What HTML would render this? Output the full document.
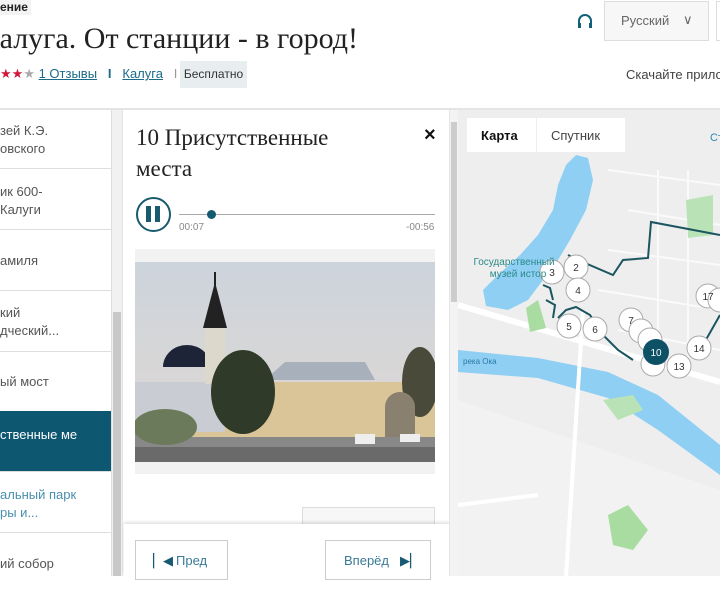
<!DOCTYPE html>
<html><head><meta charset="utf-8"><style>
*{margin:0;padding:0;box-sizing:border-box}
body{width:720px;height:576px;overflow:hidden;background:#fff;font-family:"Liberation Sans","DejaVu Sans",sans-serif;position:relative;color:#333}
.a{position:absolute}
.serif{font-family:"Liberation Serif","DejaVu Serif",serif}
.li{position:absolute;left:0;width:111px;height:61px;border-bottom:1px solid #ddd;font-size:13px;color:#555;padding-left:0;line-height:18px}
</style></head><body>
<div class="a" style="left:0;top:0;font-size:12px;font-weight:bold;color:#222;background:#f3f3f3;padding:0 3px 1px 0">ение</div>
<div class="a serif" style="left:-20px;top:22px;font-size:30px;color:#222">Калуга. От станции - в город!</div>
<div class="a" style="left:0;top:66px;font-size:13px;color:#444;white-space:nowrap"><span style="color:#d0183c">★★</span><span style="color:#aaa">★</span> <span style="color:#1a6a88;text-decoration:underline">1 Отзывы</span> &nbsp; <b style="color:#1a6a88">I</b> &nbsp; <span style="color:#1a6a88;text-decoration:underline">Калуга</span> &nbsp; <span style="color:#999">I</span></div>
<div class="a" style="left:180px;top:61px;width:67px;height:27px;background:#e8edf0;font-size:12px;line-height:27px;text-align:center;color:#333">Бесплатно</div>
<div class="a" style="left:626px;top:67px;font-size:13px;color:#444;white-space:nowrap">Скачайте прило</div>
<svg class="a" style="left:577px;top:13px" width="16" height="16" viewBox="0 0 16 16"><path d="M2 13V8a6 6 0 0 1 12 0v5" fill="none" stroke="#11607a" stroke-width="2"/><rect x="1" y="10" width="3" height="5" fill="#11607a"/><rect x="12" y="10" width="3" height="5" fill="#11607a"/></svg>
<div class="a" style="left:604px;top:1px;width:105px;height:40px;border:1px solid #ddd;background:#f7f7f7;font-size:13px;color:#666;line-height:38px;padding-left:16px">Русский<span style="position:absolute;left:78px;top:-1px;font-size:13px">∨</span></div>
<div class="a" style="left:716px;top:1px;width:4px;height:40px;border:1px solid #ddd;border-right:none"></div>
<div class="a" style="left:0;top:108px;width:720px;height:2px;background:#e4e4e4"></div>

<div class="li" style="top:108px;padding-top:14px">зей К.Э.<br>овского</div>
<div class="li" style="top:169px;padding-top:14px">ик 600-<br>Калуги</div>
<div class="li" style="top:230px;padding-top:22px">амиля</div>
<div class="li" style="top:291px;padding-top:13px">кий<br>дческий...</div>
<div class="li" style="top:351px;padding-top:22px">ый мост</div>
<div class="li" style="top:411px;background:#0d5770;color:#fff;padding-top:15px">ственные ме</div>
<div class="li" style="top:472px;color:#4a8fb0;padding-top:14px">альный парк<br>ры и...</div>
<div class="li" style="top:533px;padding-top:22px;border-bottom:none">ий собор</div>
<div class="a" style="left:111px;top:110px;width:11px;height:466px;background:#f1f1f1;border-left:1px solid #ddd"></div>
<div class="a" style="left:113px;top:312px;width:8px;height:264px;background:#c8c8c8"></div>

<div class="a" style="left:122px;top:110px;width:336px;height:466px;border-left:1px solid #e3e3e3"></div>
<div class="a serif" style="left:136px;top:122px;font-size:23px;line-height:31px;color:#222">10 Присутственные<br>места</div>
<div class="a" style="left:424px;top:124px;font-size:20px;font-weight:bold;color:#111">×</div>
<div class="a" style="left:136px;top:197px;width:35px;height:35px;border:2px solid #1a5a6e;border-radius:50%"></div>
<div class="a" style="left:146px;top:206px;width:5px;height:16px;background:#1a5a6e"></div>
<div class="a" style="left:155px;top:206px;width:5px;height:16px;background:#1a5a6e"></div>
<div class="a" style="left:179px;top:214px;width:256px;height:1px;background:#aaa"></div>
<div class="a" style="left:207px;top:210px;width:9px;height:9px;border-radius:50%;background:#145a70"></div>
<div class="a" style="left:179px;top:222px;font-size:10px;color:#888">00:07</div>
<div class="a" style="left:406px;top:222px;font-size:10px;color:#888">-00:56</div>
<div class="a" style="left:135px;top:249px;width:300px;height:225px;background:#f2f2f2"></div>
<svg class="a" style="left:135px;top:262px" width="300" height="200" viewBox="0 0 300 200">
<defs><linearGradient id="sk" x1="0" y1="0" x2="0" y2="1"><stop offset="0" stop-color="#cdd4dc"/><stop offset="1" stop-color="#e0d8d2"/></linearGradient></defs>
<rect width="300" height="200" fill="url(#sk)"/>
<rect x="0" y="130" width="300" height="70" fill="#888"/>
<rect x="45" y="120" width="255" height="55" fill="#d9c598"/>
<path d="M130 118L150 100L230 100L240 118z" fill="#a8b0bc"/>
<rect x="0" y="120" width="90" height="50" fill="#c9ccd2"/>
<path d="M28 105a24 22 0 0 1 48 0z" fill="#1e2438"/>
<rect x="70" y="62" width="20" height="60" fill="#ddd8cc"/>
<path d="M68 66L80 20L92 66z" fill="#222"/>
<rect x="79" y="10" width="2" height="15" fill="#222"/>
<ellipse cx="108" cy="130" rx="32" ry="42" fill="#2f3a28"/>
<ellipse cx="30" cy="165" rx="32" ry="18" fill="#6a7a5a"/>
<ellipse cx="285" cy="120" rx="18" ry="35" fill="#4a4a3a"/>
<path d="M250 175V145a15 15 0 0 1 30 0V175z" fill="#8a8070"/>
<rect x="0" y="185" width="300" height="15" fill="#6a6a6a"/>
<rect x="220" y="172" width="20" height="10" fill="#eee"/><rect x="265" y="172" width="20" height="8" fill="#eee"/>
</svg>
<div class="a" style="left:302px;top:507px;width:133px;height:30px;border:1px solid #ddd;background:#f7f7f7;font-size:12px;color:#666;padding:14px 0 0 18px">Поделиться</div>
<div class="a" style="left:124px;top:524px;width:326px;height:52px;background:#fff;box-shadow:0 -2px 3px rgba(0,0,0,.12)"></div>
<div class="a" style="left:135px;top:540px;width:93px;height:40px;border:1px solid #ccc;font-size:13px;color:#3a7a98;line-height:40px;padding-left:40px"><b style="position:absolute;left:17px;color:#175a72;font-size:13px">▏◀</b>Пред</div>
<div class="a" style="left:325px;top:540px;width:106px;height:40px;border:1px solid #ccc;font-size:13px;color:#3a7a98;line-height:40px;padding-left:18px">Вперёд<b style="position:absolute;left:74px;color:#175a72">▶▏</b></div>
<div class="a" style="left:449px;top:110px;width:9px;height:466px;background:#f3f3f3;border-left:1px solid #e4e4e4"></div>
<div class="a" style="left:451px;top:122px;width:6px;height:180px;background:#ccc"></div>

<svg class="a" style="left:458px;top:110px" width="262" height="466" viewBox="0 0 262 466">
<rect width="262" height="466" fill="#eeeeee"/>
<path d="M0 195L262 272" stroke="#fff" stroke-width="6"/>
<g stroke="#fafafa" stroke-width="2" fill="none"><path d="M150 60L262 75M170 100L262 115M150 140L262 155M200 60V260M230 60V260M140 180L262 200M160 220L262 240"/></g>
<path d="M0 240L80 248L150 262L200 285L262 335V365L200 320L150 288L80 268L0 262Z" fill="#8ecff3"/>
<path d="M108 55L118 45L130 48L135 70L128 100L112 130L100 150L85 170L70 190L50 200L28 196L25 180L40 165L62 145L80 125L95 100L100 75Z" fill="#8ecff3"/>
<path d="M0 290L262 380V466H0Z" fill="#f3f3f3" opacity=".7"/>
<path d="M145 290L175 285L185 300L160 310Z" fill="#b9e3b6"/>
<path d="M150 405L170 395L190 420L175 440L155 435Z" fill="#a8dca0"/><path d="M68 198L80 190L88 218L72 222Z" fill="#a8dca0"/>
<path d="M228 90L255 85V125L230 128Z" fill="#b9e3b6"/>
<path d="M125 200L108 466" stroke="#fff" stroke-width="4"/>
<path d="M0 395L80 385" stroke="#fff" stroke-width="4"/>
<path d="M120 150L155 165L165 150L190 148L193 112L262 125M100 208L108 200L118 197L132 205L145 225L160 240L175 250M88 190L97 195L95 208M120 150L110 145M85 175L92 178L95 190M262 205L245 235" fill="none" stroke="#1b5560" stroke-width="2"/>
<g font-size="10" font-family="Liberation Sans" text-anchor="middle" fill="#333">
<g fill="#fff" stroke="#aaa">
<circle cx="118" cy="157" r="12"/><circle cx="94" cy="162" r="12"/><circle cx="120" cy="180" r="12"/><circle cx="111" cy="216" r="12"/><circle cx="137" cy="219" r="12"/><circle cx="173" cy="210" r="12"/><circle cx="183" cy="221" r="12"/><circle cx="192" cy="230" r="12"/><circle cx="195" cy="254" r="12"/><circle cx="221" cy="256" r="12"/><circle cx="241" cy="238" r="12"/><circle cx="250" cy="186" r="12"/><circle cx="262" cy="190" r="12"/></g>
<circle cx="198" cy="242" r="13" fill="#0e5066"/>
<text x="94" y="166">3</text><text x="118" y="161">2</text><text x="120" y="184">4</text><text x="111" y="220">5</text><text x="137" y="223">6</text><text x="173" y="214">7</text><text x="241" y="242">14</text><text x="221" y="260">13</text><text x="250" y="190">17</text><text x="198" y="246" fill="#fff">10</text>
<text x="56" y="155" fill="#2b8a8a" font-size="10">Государственный</text><text x="60" y="167" fill="#2b8a8a" font-size="10">музей истор</text></g>
<text x="5" y="254" font-size="8" fill="#2a7aa8" font-family="Liberation Sans">река Ока</text>
<rect x="9" y="8" width="158" height="34" fill="#fff"/><rect x="78" y="8" width="1" height="34" fill="#eee"/>
<text x="23" y="30" font-size="13" font-weight="bold" fill="#111" font-family="Liberation Sans">Карта</text>
<text x="93" y="30" font-size="13" fill="#444" font-family="Liberation Sans">Спутник</text>
<text x="252" y="31" font-size="11" fill="#2a8ab0" font-family="Liberation Sans">Ст</text>
</svg>
</body></html>
